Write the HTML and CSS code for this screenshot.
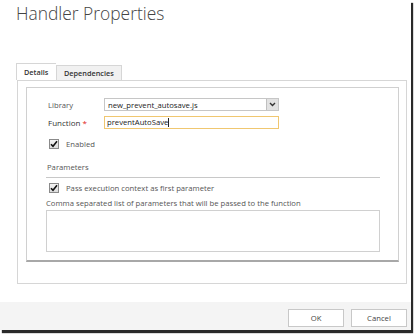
FILE: index.html
```html
<!DOCTYPE html>
<html lang="en">
<head>
    <meta charset="UTF-8">
    <title>Handler Properties</title>
    <link rel="stylesheet" href="styles.css">
</head>
<body>
    <div class="window">
        <h1 class="title">Handler Properties</h1>

        <div class="tabs">
            <div class="tab active">Details</div>
            <div class="tab">Dependencies</div>
        </div>

        <div class="panel">
            <div class="section">
                <div class="row">
                    <span class="label">Library</span>
                    <div class="select">
                        <span class="select-text">new_prevent_autosave.js</span>
                        <span class="select-btn">
                            <svg width="7" height="5" viewBox="0 0 7 5"><path d="M1 1 L3.5 3.5 L6 1" fill="none" stroke="#333" stroke-width="1.4"/></svg>
                        </span>
                    </div>
                </div>
                <div class="row">
                    <span class="label required">Function <b class="star">*</b></span>
                    <div class="input focused">preventAutoSave<span class="caret"></span></div>
                </div>
                <div class="check-row enabled-row">
                    <span class="checkbox"><svg width="8" height="8" viewBox="0 0 8 8"><path d="M1 4.2 L3 6.3 L7 1.3" fill="none" stroke="#111" stroke-width="1.6"/></svg></span>
                    <span class="check-label">Enabled</span>
                </div>

                <div class="params-title">Parameters</div>
                <div class="divider"></div>

                <div class="check-row pass-row">
                    <span class="checkbox"><svg width="8" height="8" viewBox="0 0 8 8"><path d="M1 4.2 L3 6.3 L7 1.3" fill="none" stroke="#111" stroke-width="1.6"/></svg></span>
                    <span class="check-label">Pass execution context as first parameter</span>
                </div>
                <div class="hint">Comma separated list of parameters that will be passed to the function</div>
                <div class="textarea"></div>
            </div>
        </div>

        <div class="footer">
            <button class="btn">OK</button>
            <button class="btn">Cancel</button>
        </div>
    </div>
</body>
</html>
```

FILE: styles.css
```css
body {
    margin: 0;
    width: 415px;
    height: 335px;
    overflow: hidden;
    background-color: #fff;
    font-family: "Open Sans", "Noto Sans", sans-serif;
    font-size: 7.7px;
    color: #444;
}

.window {
    width: 411px;
    height: 330px;
    background-color: #fff;
    box-shadow: 2px 3px 1px #2a2a2a;
    display: flex;
    flex-direction: column;
}

.title {
    margin: 0;
    padding: 1px 0 0 16px;
    height: 63px;
    box-sizing: border-box;
    font-size: 17.4px;
    font-weight: 300;
    line-height: 24px;
    color: #444;
}

.tabs {
    display: flex;
    align-items: flex-end;
    margin-left: 16px;
    height: 17px;
}

.tab {
    height: 14px;
    line-height: 14px;
    padding: 0 7px;
    border: 1px solid #d6d6d6;
    border-bottom: none;
    background-color: #f1f1f1;
    color: #333;
    font-weight: 600;
    font-size: 7.3px;
}

.tab.active {
    height: 16px;
    line-height: 17px;
    background-color: #fff;
    border-right: none;
    width: 25px;
}

.panel {
    margin: 0 4px 0 17px;
    height: 204px;
    box-sizing: border-box;
    border: 1px solid #d6d6d6;
    padding: 6px 7px 0 8px;
}

.section {
    height: 175px;
    box-sizing: border-box;
    border: 1px solid #d0d0d0;
    border-bottom: 2px solid #a8a8a8;
    padding: 10px 18px 0 19px;
    display: flex;
    flex-direction: column;
}

.row {
    display: flex;
    align-items: center;
    height: 13px;
    margin-bottom: 5px;
}

.label {
    width: 56px;
    padding-left: 2px;
    color: #555;
}

.label.required {
    color: #333;
    font-size: 8px;
}

.star {
    color: #e02020;
    font-weight: normal;
}

.select {
    width: 175px;
    height: 13px;
    box-sizing: border-box;
    border: 1px solid #c6c6c6;
    display: flex;
    align-items: center;
    color: #222;
}

.select-text {
    flex: 1;
    padding-left: 3px;
}

.select-btn {
    width: 11px;
    height: 11px;
    background-color: #e2e2e2;
    border-left: 1px solid #c0c0c0;
    display: flex;
    align-items: center;
    justify-content: center;
}

.input {
    width: 175px;
    height: 13px;
    box-sizing: border-box;
    border: 1px solid #f0c770;
    padding-left: 2px;
    line-height: 11px;
    color: #222;
}

.caret {
    display: inline-block;
    width: 1px;
    height: 9px;
    background-color: #222;
    vertical-align: middle;
}

.check-row {
    display: flex;
    align-items: center;
}

.enabled-row {
    margin-top: 5px;
    height: 10px;
}

.checkbox {
    width: 10px;
    height: 10px;
    box-sizing: border-box;
    border: 1px solid #8a8a8a;
    background: linear-gradient(#f4f4f4, #dcdcdc);
    display: flex;
    align-items: center;
    justify-content: center;
    margin-left: 3px;
}

.check-label {
    margin-left: 7px;
    color: #555;
}

.params-title {
    margin-top: 13px;
    padding-left: 1px;
    height: 12px;
    color: #555;
}

.divider {
    margin-top: 3px;
    height: 1px;
    background-color: #c8c8c8;
}

.pass-row {
    margin-top: 5px;
    height: 10px;
}

.hint {
    margin-top: 4px;
    height: 12px;
    line-height: 12px;
    color: #555;
}

.textarea {
    margin-top: 1px;
    height: 42px;
    box-sizing: border-box;
    border: 1px solid #d0d0d0;
}

.footer {
    margin-top: auto;
    height: 28px;
    background-color: #f4f4f4;
    display: flex;
    justify-content: flex-end;
    align-items: flex-start;
    gap: 7px;
    padding: 7px 4px 0 0;
    box-sizing: border-box;
}

.btn {
    width: 56px;
    height: 18px;
    padding: 0;
    border: 1px solid #c8c8c8;
    background-color: #fff;
    font-family: "Open Sans", "Noto Sans", sans-serif;
    font-size: 7.7px;
    color: #444;
}
```
